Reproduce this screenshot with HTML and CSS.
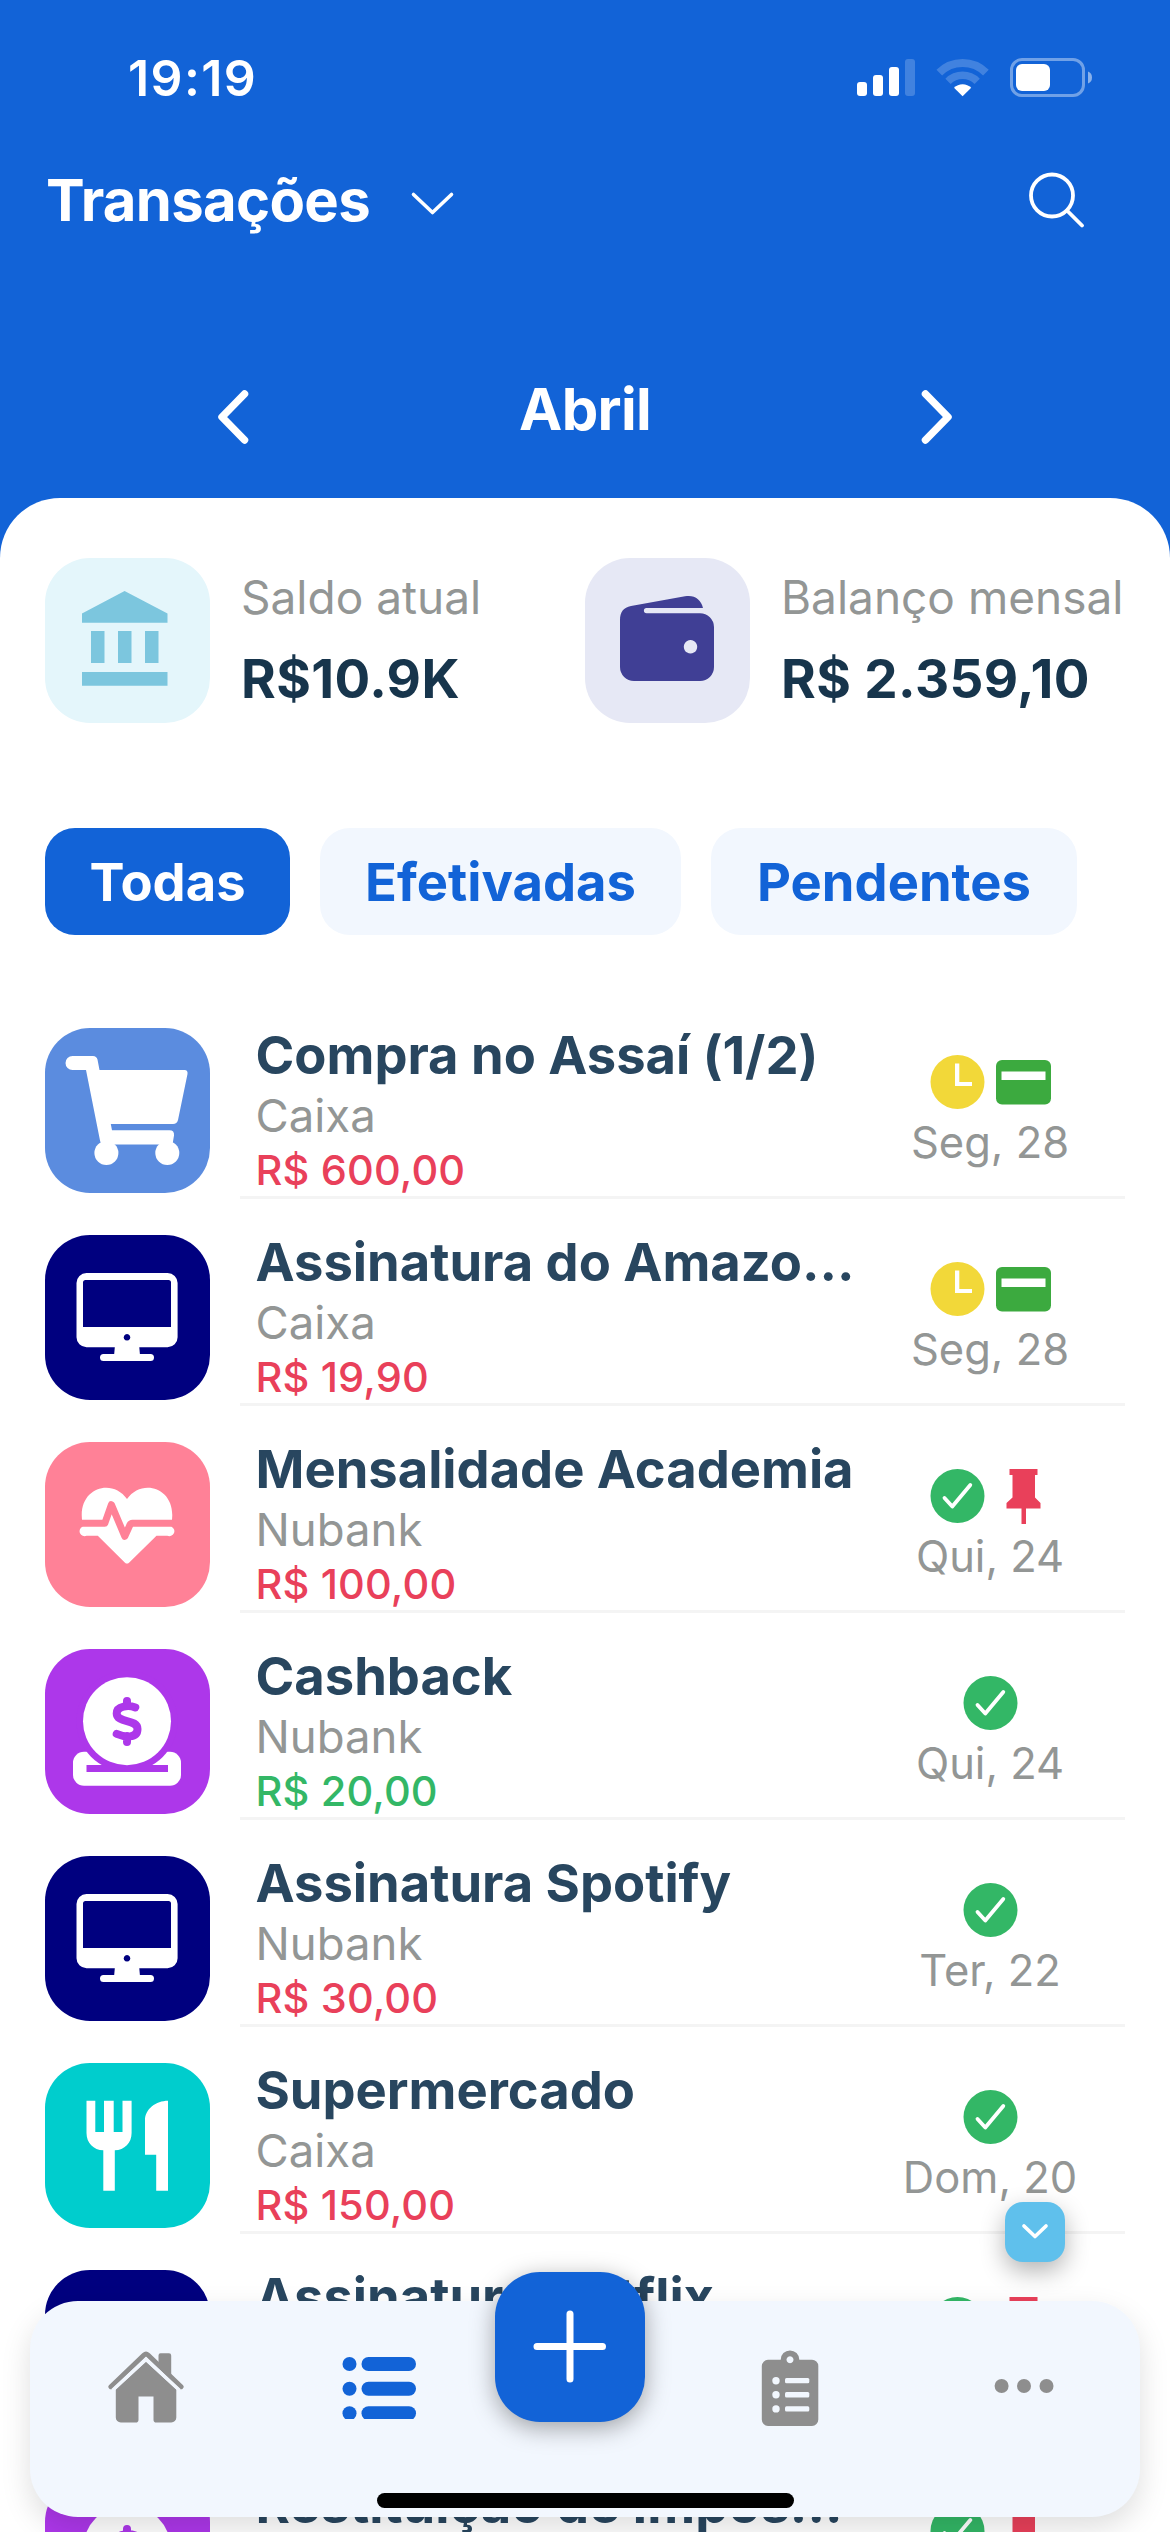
FILE: index.html
```html
<!DOCTYPE html>
<html lang="pt-BR">
<head>
<meta charset="utf-8">
<title>Transações</title>
<link rel="stylesheet" href="styles.css">
</head>
<body>
<svg class="sprite" aria-hidden="true">
  <symbol id="cart" viewBox="0 0 165 165">
    <path fill="#fff" d="M27.500 28H48Q51.500 28 52.500 31.500L54.500 42H139.500Q143 42 142.500 46L133 92Q132 96 128 96H65.800L67 102.300H124.500Q129.500 102.300 129 107.500L127.500 116.600H58Q55.600 116 55 112.500L41 42H27.500A7 7 0 0 1 27.500 28Z"/>
    <circle cx="61.400" cy="125" r="12" fill="#fff"/><circle cx="122.300" cy="125" r="12" fill="#fff"/>
  </symbol>
  <symbol id="monitor" viewBox="0 0 165 165">
    <path fill="#fff" fill-rule="evenodd" d="M41.500 38H122.600a10 10 0 0 1 10 10V102.300a10 10 0 0 1-10 10H94.300L94.900 119H105.500a3.500 3.500 0 0 1 0 7H58.500a3.500 3.500 0 0 1 0-7H69.200L69.800 112.300H41.500a10 10 0 0 1-10-10V48A10 10 0 0 1 41.500 38ZM40.500 45Q38 45 38 47.500V92H126V47.500Q126 45 123.500 45ZM82 99a3.300 3.300 0 1 0 .01 0Z"/>
  </symbol>
  <symbol id="health" viewBox="0 0 165 165">
    <path fill="#fff" d="M37.500 81C31 46 67 35 82 57C97 35 133 46 126.500 81V84.700A4.500 4.500 0 0 1 122.300 93.700H111.500L84 120.700Q82 122.500 80 120.700L52.800 93.700H41.500A4.500 4.500 0 0 1 37.500 84.700Z"/>
    <path class="pulse" d="M34 81.300H59.800L66.400 62.700L79.800 94.300L85 82.800Q85.700 81.300 87.500 81.300H130"/>
  </symbol>
  <symbol id="coin" viewBox="0 0 165 165">
    <rect x="28" y="102.700" width="108" height="34" rx="11" fill="#fff"/>
    <circle cx="82" cy="72.200" r="50.600" fill="#ad37ea"/>
    <rect x="41.500" y="116" width="81.500" height="7" fill="#ad37ea"/>
    <circle cx="82" cy="72.200" r="44" fill="#fff"/>
    <path fill="none" stroke="#ad37ea" stroke-width="8" stroke-linecap="round" d="M90.300 58.400C84 56 71.700 56.500 71.700 64.500C71.700 74.500 92.500 69.500 92.500 80C92.500 90 79 88 71.700 84.900M82 52V57M82 87V93"/>
  </symbol>
  <symbol id="food" viewBox="0 0 165 165">
    <path fill="#fff" d="M41.500 37.700H50.300V69H59V37.700H68.700V69H77.500V37.700H86.600V70C86.600 80 79.500 87 69.800 87.300V127.700H58.300V87.300C48.500 87 41.500 80 41.500 70ZM123 37.700V127.700H111.200V91.700H100V57C100 46 111 37.700 123 37.700Z"/>
  </symbol>
  <symbol id="check" viewBox="0 0 55 55">
    <circle cx="27.500" cy="27" r="27" fill="#33b766"/>
    <path fill="none" stroke="#fff" stroke-width="3.800" stroke-linecap="round" stroke-linejoin="round" d="M14.500 29L22.300 37.500L40.300 16"/>
  </symbol>
  <symbol id="clock" viewBox="0 0 55 55">
    <circle cx="27.500" cy="27" r="27" fill="#f2d839"/>
    <path fill="#fff" d="M25 8.500H29.300V27H42V31H25Z"/>
  </symbol>
  <symbol id="card" viewBox="0 0 55 55">
    <rect y="5" width="55" height="44.500" rx="6" fill="#3caa3f"/><rect x="5.500" y="16.500" width="44" height="8.500" fill="#fff"/>
  </symbol>
  <symbol id="pin" viewBox="0 0 55 55">
    <path fill="#e9405a" d="M13.500 0H41.500V6H39V28.500L44.500 34V39.500H30V55.500H25.500V39.500H10.500V34L16.500 28.500V6H13.500Z"/>
  </symbol>
</svg>

<header class="header">
  <div class="status-bar">
    <span class="time">19:19</span>
    <svg class="indicators" width="236" height="40" viewBox="0 0 236 40">
      <g fill="#fff">
        <rect y="24" width="10" height="14" rx="3"/><rect x="16" y="17" width="10" height="21" rx="3"/><rect x="32" y="9" width="10" height="29" rx="3"/>
        <rect x="48" y="1" width="10" height="37" rx="3" opacity=".2"/>
        <path d="M105.600 38.300L97 29.700A12.300 12.300 0 0 1 114.200 29.700Z"/>
      </g>
      <g fill="none" stroke="#fff" stroke-opacity=".2"><path stroke-width="8" d="M82.300 14.700A33 33 0 0 1 128.900 14.700"/><path stroke-width="7.500" d="M91 23.400A20.700 20.700 0 0 1 120.200 23.400"/></g>
      <rect x="154.500" y="1.500" width="72" height="36" rx="10.500" fill="none" stroke="#fff" stroke-opacity=".4" stroke-width="3"/>
      <rect x="159" y="6" width="34" height="27" rx="6" fill="#fff"/>
      <path d="M231 13.500Q235 15 235 19.500T231 25.500Z" fill="#fff" opacity=".5"/>
    </svg>
  </div>
  <div class="title-bar">
    <h1 class="title">Transações</h1>
    <svg class="chevron" width="45" height="27" viewBox="0 0 45 27"><path d="M3.500 3.500L22.500 21.500L41.500 3.500"/></svg>
    <svg class="search" width="56" height="56" viewBox="0 0 56 56"><circle cx="23" cy="23.500" r="21"/><path d="M38 38.500L53 53.500"/></svg>
  </div>
  <div class="month-nav">
    <svg class="arrow" width="34" height="56" viewBox="0 0 34 56"><path d="M28.500 5L6 28L28.500 51"/></svg>
    <h2 class="month">Abril</h2>
    <svg class="arrow" width="34" height="56" viewBox="0 0 34 56"><path d="M5.500 5L28 28L5.500 51"/></svg>
  </div>
</header>

<main class="panel">
  <section class="summary">
    <div class="stat">
      <div class="tile tile-bank"><svg viewBox="0 0 165 165"><path fill="#7cc6de" d="M79.600 33L122.500 55.500V64.700H37V55.500ZM46 73H59.500V105H46ZM73 73H86.500V105H73ZM100 73H113.500V105H100ZM37 114H122.500V127.700H37Z"/></svg></div>
      <div class="stat-text"><span class="stat-label">Saldo atual</span><strong class="stat-value">R$10.9K</strong></div>
    </div>
    <div class="stat">
      <div class="tile tile-wallet"><svg viewBox="0 0 165 165"><path fill="#403f95" fill-rule="evenodd" d="M46 48L100 38.300C109 36.500 116 41 118 50H61.500A2.600 2.600 0 0 0 61.500 55.200H115A14 14 0 0 1 129 69V109A14 14 0 0 1 115 123H49A14 14 0 0 1 35 109V62C35 54 38.500 49.500 46 48ZM105.500 82.100a6.700 6.700 0 1 0 .01 0Z"/></svg></div>
      <div class="stat-text"><span class="stat-label">Balanço mensal</span><strong class="stat-value">R$ 2.359,10</strong></div>
    </div>
  </section>

  <nav class="filters">
    <button class="filter filter-all active">Todas</button>
    <button class="filter filter-done">Efetivadas</button>
    <button class="filter filter-pending">Pendentes</button>
  </nav>

  <ul class="list">
    <li class="row">
      <div class="tile tile-cart"><svg><use href="#cart"/></svg></div>
      <div class="entry">
        <div class="info"><h3 class="name">Compra no Assaí (1/2)</h3><p class="account">Caixa</p><p class="amount">R$ 600,00</p></div>
        <div class="status"><div class="badges"><svg><use href="#clock"/></svg><svg><use href="#card"/></svg></div><p class="date">Seg, 28</p></div>
      </div>
    </li>
    <li class="row">
      <div class="tile tile-monitor"><svg><use href="#monitor"/></svg></div>
      <div class="entry">
        <div class="info"><h3 class="name">Assinatura do Amazo...</h3><p class="account">Caixa</p><p class="amount">R$ 19,90</p></div>
        <div class="status"><div class="badges"><svg><use href="#clock"/></svg><svg><use href="#card"/></svg></div><p class="date">Seg, 28</p></div>
      </div>
    </li>
    <li class="row">
      <div class="tile tile-health"><svg><use href="#health"/></svg></div>
      <div class="entry">
        <div class="info"><h3 class="name">Mensalidade Academia</h3><p class="account">Nubank</p><p class="amount">R$ 100,00</p></div>
        <div class="status"><div class="badges"><svg><use href="#check"/></svg><svg><use href="#pin"/></svg></div><p class="date">Qui, 24</p></div>
      </div>
    </li>
    <li class="row">
      <div class="tile tile-coin"><svg><use href="#coin"/></svg></div>
      <div class="entry">
        <div class="info"><h3 class="name">Cashback</h3><p class="account">Nubank</p><p class="amount income">R$ 20,00</p></div>
        <div class="status"><div class="badges"><svg><use href="#check"/></svg></div><p class="date">Qui, 24</p></div>
      </div>
    </li>
    <li class="row">
      <div class="tile tile-monitor"><svg><use href="#monitor"/></svg></div>
      <div class="entry">
        <div class="info"><h3 class="name">Assinatura Spotify</h3><p class="account">Nubank</p><p class="amount">R$ 30,00</p></div>
        <div class="status"><div class="badges"><svg><use href="#check"/></svg></div><p class="date">Ter, 22</p></div>
      </div>
    </li>
    <li class="row">
      <div class="tile tile-food"><svg><use href="#food"/></svg></div>
      <div class="entry">
        <div class="info"><h3 class="name">Supermercado</h3><p class="account">Caixa</p><p class="amount">R$ 150,00</p></div>
        <div class="status"><div class="badges"><svg><use href="#check"/></svg></div><p class="date">Dom, 20</p></div>
      </div>
    </li>
    <li class="row">
      <div class="tile tile-monitor"><svg><use href="#monitor"/></svg></div>
      <div class="entry">
        <div class="info"><h3 class="name">Assinatura Netflix</h3></div>
        <div class="status"><div class="badges"><svg><use href="#check"/></svg><svg><use href="#pin"/></svg></div></div>
      </div>
    </li>
    <li class="row">
      <div class="tile tile-coin"><svg><use href="#coin"/></svg></div>
      <div class="entry">
        <div class="info"><h3 class="name">Restituição de Impos...</h3></div>
        <div class="status"><div class="badges"><svg><use href="#check"/></svg><svg><use href="#pin"/></svg></div></div>
      </div>
    </li>
  </ul>
</main>

<button class="scroll-down" aria-label="Rolar para baixo"><svg width="30" height="20" viewBox="0 0 30 20"><path d="M4 4L15 14.500L26 4"/></svg></button>

<nav class="tab-bar">
  <svg class="tab" viewBox="0 0 76 72">
    <path fill="none" stroke="#8e8e8e" stroke-width="5" stroke-linecap="round" stroke-linejoin="round" d="M2.900 35.700L36 4Q38 2.200 40 4L73.100 35.700"/>
    <path fill="#8e8e8e" d="M50.500 4.500Q50.500 2.300 52.500 2.300H61Q63.200 2.300 63.200 4.500V26L50.500 14.500ZM38 10.700L68.300 38.500V66.500A5 5 0 0 1 63.300 71.500H48.300Q45.500 71.500 45.500 68.700V45.500H30.500V68.700Q30.500 71.500 27.700 71.500H12.800A5 5 0 0 1 7.800 66.500V38.500Z"/>
    <path fill="none" stroke="#f2f7fe" stroke-width="3.300" d="M4.500 39.200L38 8.300L71.500 39.200"/>
  </svg>
  <svg class="tab" viewBox="0 0 76 68">
    <g fill="#1263d7"><circle cx="8.500" cy="13" r="7"/><circle cx="8.500" cy="37.700" r="7"/><circle cx="8.500" cy="62.300" r="7"/><rect x="20.500" y="6" width="54.500" height="14" rx="7"/><rect x="20.500" y="30.700" width="54.500" height="14" rx="7"/><rect x="20.500" y="55.300" width="54.500" height="14" rx="7"/></g>
  </svg>
  <button class="add" aria-label="Adicionar"><svg width="76" height="76" viewBox="0 0 76 76"><path d="M5 37.500H70.500M38 5V70"/></svg></button>
  <svg class="tab tab-clip" viewBox="0 0 76 76">
    <path fill="#8e8e8e" fill-rule="evenodd" d="M16 9.700H28.700A9.300 9.300 0 1 1 47.300 9.700H60A6.500 6.500 0 0 1 66.300 16V69.500A6.500 6.500 0 0 1 60 76H16A6.500 6.500 0 0 1 9.800 69.500V16A6.500 6.500 0 0 1 16 9.700ZM38 6.200a3.500 3.500 0 1 0 .01 0Z"/>
    <g fill="#f2f7fe"><circle cx="24" cy="30.700" r="3.700"/><circle cx="24" cy="44.700" r="3.700"/><circle cx="24" cy="58.900" r="3.700"/><rect x="33" y="28" width="24.300" height="5.300" rx="1.500"/><rect x="33" y="42.100" width="24.300" height="5.300" rx="1.500"/><rect x="33" y="56.200" width="24.300" height="5.300" rx="1.500"/></g>
  </svg>
  <svg class="tab" viewBox="0 0 76 72"><g fill="#8e8e8e"><circle cx="15.600" cy="35" r="7"/><circle cx="38" cy="35" r="7"/><circle cx="60.500" cy="35" r="7"/></g></svg>
</nav>
<div class="home-indicator"></div>
</body>
</html>
```
FILE: styles.css
```css
* { box-sizing: border-box; margin: 0; padding: 0; }

body {
  width: 1170px;
  height: 2532px;
  overflow: hidden;
  background: #1263d7;
  font-family: Inter, "Liberation Sans", sans-serif;
}

svg { display: block; }
button { border: 0; font: inherit; }
.sprite { position: absolute; width: 0; height: 0; }

/* Header */
.header { height: 498px; color: #fff; }
.status-bar {
  display: flex;
  justify-content: space-between;
  align-items: center;
  height: 156px;
  padding: 0 77px 0 128px;
}
.time { font-size: 50px; font-weight: 600; letter-spacing: 1.4px; }
.title-bar { display: flex; align-items: center; height: 88px; padding: 0 85px 0 46px; }
.title { width: 364px; font-size: 58px; font-weight: 700; line-height: 87px; letter-spacing: -.7px; }
.chevron { margin-top: 9px; fill: none; stroke: #fff; stroke-width: 3.6; stroke-linecap: round; stroke-linejoin: round; }
.search { margin-left: auto; fill: none; stroke: #fff; stroke-width: 3.8; stroke-linecap: round; }
.month-nav {
  display: flex;
  justify-content: space-between;
  align-items: center;
  height: 78px;
  margin-top: 126px;
  padding: 0 216px;
}
.month { font-size: 58px; font-weight: 700; letter-spacing: -.7px; }
.arrow { margin-top: 16px; fill: none; stroke: #fff; stroke-width: 7.5; stroke-linecap: round; stroke-linejoin: round; }

/* Content panel */
.panel {
  height: 2034px;
  padding: 60px 45px 0;
  overflow: hidden;
  border-radius: 60px 60px 0 0;
  background: #fff;
}
.tile { flex: none; width: 165px; height: 165px; border-radius: 45px; overflow: hidden; }
.tile svg { width: 165px; height: 165px; }
.tile-bank { background: #e4f6fb; }
.tile-wallet { background: #e6e8f5; }
.tile-cart { background: #5b8cdf; }
.tile-monitor { background: #00007f; }
.tile-health { background: #ff8197; }
.tile-coin { background: #ad37ea; }
.tile-food { background: #00cdcd; }
.pulse { fill: none; stroke: #ff8197; stroke-width: 7; stroke-linejoin: round; }

.summary { display: grid; grid-template-columns: 540px 540px; }
.stat { display: flex; gap: 30px; }
.stat-text { display: flex; flex-direction: column; padding-left: 1px; white-space: nowrap; }
.stat-label { color: #939695; font-size: 46px; line-height: 78px; }
.stat-value { color: #17354c; font-size: 53px; font-weight: 700; line-height: 87px; letter-spacing: .4px; }

.filters { display: flex; gap: 30px; margin-top: 105px; }
.filter {
  height: 107px;
  border-radius: 30px;
  background: #f2f7fe;
  color: #1263d7;
  font-size: 52.500px;
  font-weight: 700;
}
.filter.active { background: #1263d7; color: #fff; }
.filter-all { width: 245px; }
.filter-done { width: 361px; }
.filter-pending { width: 366px; }

/* Transactions */
.list { margin-top: 93px; list-style: none; }
.row { display: flex; gap: 30px; height: 207px; }
.entry { display: flex; flex: 1; height: 171px; border-bottom: 3px solid #f4f4f4; }
.info { width: 614px; padding-left: 15.500px; white-space: nowrap; }
.name { color: #28465f; font-size: 52.500px; font-weight: 700; line-height: 55px; letter-spacing: -.02px; }
.account { color: #939695; font-size: 45.500px; line-height: 65px; }
.amount { color: #e9405a; font-size: 41.500px; font-weight: 500; line-height: 44px; letter-spacing: .15px; }
.amount.income { color: #33b766; }
.status { flex: 1; padding: 27px 0 0 1px; text-align: center; }
.badges { display: flex; justify-content: center; gap: 11px; }
.badges svg { width: 55px; height: 55px; overflow: visible; }
.date { color: #939695; font-size: 43.500px; line-height: 64px; }

/* Floating controls */
.scroll-down {
  position: fixed;
  top: 2202px;
  left: 1005px;
  display: grid;
  place-items: center;
  width: 60px;
  height: 60px;
  border-radius: 18px;
  background: #5fc0ec;
  box-shadow: 0 9px 24px rgba(0, 0, 0, .3);
}
.scroll-down svg, .add svg { fill: none; stroke: #fff; stroke-linecap: round; stroke-linejoin: round; }
.scroll-down svg { stroke-width: 3.7; }

.tab-bar {
  position: fixed;
  right: 30px;
  bottom: 15px;
  left: 30px;
  display: grid;
  grid-template-columns: 231px 235px 148px 292px 176px;
  justify-items: center;
  align-items: start;
  height: 216px;
  padding-top: 50px;
  border-radius: 48px;
  background: #f2f7fe;
  box-shadow: 0 12px 30px rgba(0, 0, 0, .13);
}
.tab { width: 76px; }
.tab-clip { margin-top: -1px; }
.add {
  display: grid;
  place-items: center;
  width: 150px;
  height: 150px;
  margin-top: -79px;
  border-radius: 45px;
  background: #1263d7;
  box-shadow: 0 6px 24px rgba(0, 0, 0, .35);
}
.add svg { stroke-width: 7; }
.home-indicator {
  position: fixed;
  bottom: 24px;
  left: 377px;
  width: 417px;
  height: 15px;
  border-radius: 8px;
  background: #000;
}
```
